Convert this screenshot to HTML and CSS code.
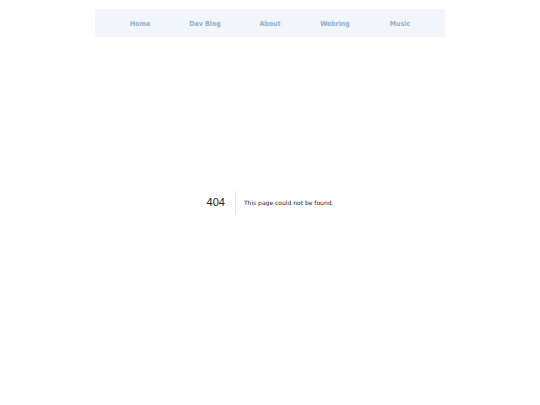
FILE: index.html
```html
<!DOCTYPE html>
<html>
<head>
<meta charset="utf-8">
<link rel="stylesheet" href="styles.css">
</head>
<body>
<div class="page">
  <nav class="nav">
    <a class="nav-link" href="#">Home</a>
    <a class="nav-link" href="#">Dev Blog</a>
    <a class="nav-link" href="#">About</a>
    <a class="nav-link" href="#">Webring</a>
    <a class="nav-link" href="#">Music</a>
  </nav>
  <main class="error">
    <h1 class="code">404</h1>
    <h2 class="msg">This page could not be found.</h2>
  </main>
</div>
</body>
</html>
```
FILE: styles.css
```css
html, body { margin: 0; padding: 0; background: #fff; }
.page {
  display: grid;
  width: 540px;
  height: 405px;
}
.nav {
  grid-area: 1 / 1;
  align-self: start;
  justify-self: center;
  margin-top: 9px;
  width: 350px;
  height: 28px;
  box-sizing: border-box;
  padding: 1px 12.5px 0;
  background: #f2f5fa;
  display: flex;
  align-items: center;
}
.nav-link {
  flex: 1;
  text-align: center;
  font-family: "DejaVu Sans Condensed", "DejaVu Sans", sans-serif;
  font-stretch: condensed;
  font-weight: bold;
  font-size: 7px;
  color: #8fb0d2;
  text-decoration: none;
}
.error {
  grid-area: 1 / 1;
  display: flex;
  align-items: center;
  justify-content: center;
  color: #000;
}
.code {
  margin: 0 8px 0 0;
  padding: 0 10px 0 0;
  font-family: "Liberation Sans", Arial, sans-serif;
  font-size: 11px;
  font-weight: 500;
  line-height: 23px;
  color: #222;
  border-right: 1px solid rgba(0,0,0,.1);
}
.msg {
  margin: 0;
  font-family: "DejaVu Sans", sans-serif;
  font-size: 6px;
  font-weight: 400;
  line-height: 23px;
  color: #222;
}
```
